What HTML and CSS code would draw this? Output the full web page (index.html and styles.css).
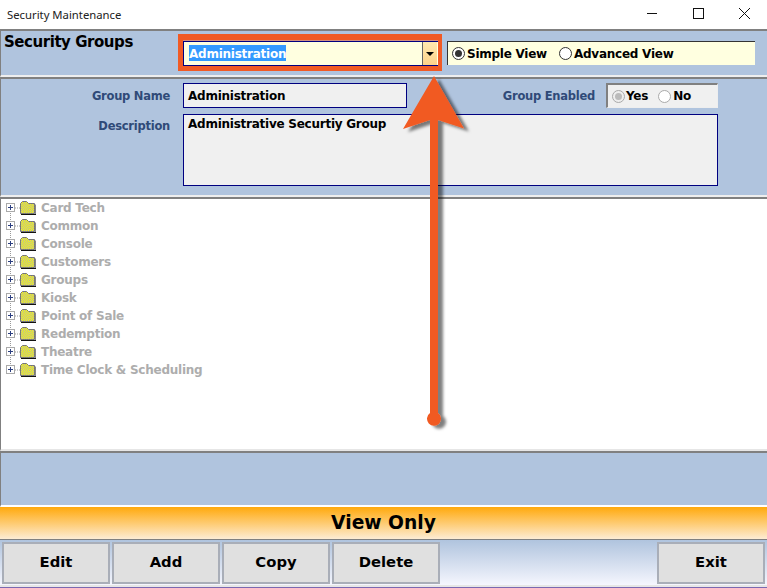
FILE: index.html
```html
<!DOCTYPE html>
<html lang="en">
<head>
    <meta charset="UTF-8">
    <meta name="viewport" content="width=device-width, initial-scale=1.0">
    <title>Security Maintenance</title>
    <link rel="stylesheet" href="styles.css">
</head>
<body>
    <svg class="defs" width="0" height="0">
        <defs>
            <pattern id="dither" width="2" height="2" patternUnits="userSpaceOnUse">
                <rect width="2" height="2" fill="#ffff00"/>
                <rect width="1" height="1" fill="#b0b0a8"/>
                <rect x="1" y="1" width="1" height="1" fill="#b0b0a8"/>
            </pattern>
            <symbol id="tree-icon" viewBox="0 0 36 18">
                <path d="M15 9h5" stroke="#999" stroke-dasharray="1 1" fill="none"/>
                <rect x="6.5" y="4.5" width="8" height="8" fill="#fff" stroke="#aaa"/>
                <path d="M8 8.5h5M10.5 6v5" stroke="#2c3f80" fill="none"/>
                <path d="M20.5 14.5v-10l2-2h4l2 2h6v10z" fill="url(#dither)" stroke="#777"/>
                <path d="M21 15.5h15v-10" stroke="#111" fill="none"/>
            </symbol>
        </defs>
    </svg>

    <div class="titlebar">
        <span class="title-text">Security Maintenance</span>
        <div class="window-buttons">
            <svg width="46" height="29" viewBox="0 0 46 29"><path d="M18 13.5h10" stroke="#111"/></svg>
            <svg width="46" height="29" viewBox="0 0 46 29"><rect x="18.5" y="8.5" width="10" height="10" fill="none" stroke="#111"/></svg>
            <svg width="46" height="29" viewBox="0 0 46 29"><path d="M18 8l11 11M29 8l-11 11" stroke="#111" fill="none"/></svg>
        </div>
    </div>

    <!-- Group picker -->
    <div class="panel header-panel">
        <h1 class="panel-title">Security Groups</h1>
        <div class="combo">
            <div class="combo-value"><span class="selected">Administration</span></div>
            <div class="combo-arrow"></div>
        </div>
        <div class="view-box">
            <span class="radio radio-on"></span><span class="radio-label">Simple View</span>
            <span class="radio radio-second"></span><span class="radio-label">Advanced View</span>
        </div>
    </div>

    <!-- Group details -->
    <div class="panel details-panel">
        <div class="details-row">
            <label class="field-label">Group Name</label>
            <div class="field name-field">Administration</div>
            <label class="field-label enabled-label">Group Enabled</label>
            <div class="enabled-box">
                <span class="radio radio-disabled"></span><span class="radio-label">Yes</span>
                <span class="radio radio-blank"></span><span class="radio-label">No</span>
            </div>
        </div>
        <div class="details-row description-row">
            <label class="field-label">Description</label>
            <div class="field description-field">Administrative Securtiy Group</div>
        </div>
    </div>

    <!-- Permission tree -->
    <div class="tree-panel">
        <ul class="tree">
            <li><svg class="tree-svg"><use href="#tree-icon"/></svg>Card Tech</li>
            <li><svg class="tree-svg"><use href="#tree-icon"/></svg>Common</li>
            <li><svg class="tree-svg"><use href="#tree-icon"/></svg>Console</li>
            <li><svg class="tree-svg"><use href="#tree-icon"/></svg>Customers</li>
            <li><svg class="tree-svg"><use href="#tree-icon"/></svg>Groups</li>
            <li><svg class="tree-svg"><use href="#tree-icon"/></svg>Kiosk</li>
            <li><svg class="tree-svg"><use href="#tree-icon"/></svg>Point of Sale</li>
            <li><svg class="tree-svg"><use href="#tree-icon"/></svg>Redemption</li>
            <li><svg class="tree-svg"><use href="#tree-icon"/></svg>Theatre</li>
            <li><svg class="tree-svg"><use href="#tree-icon"/></svg>Time Clock &amp; Scheduling</li>
        </ul>
    </div>

    <div class="panel status-panel"></div>

    <div class="mode-bar">View Only</div>

    <div class="button-bar">
        <button class="btn">Edit</button>
        <button class="btn">Add</button>
        <button class="btn">Copy</button>
        <button class="btn">Delete</button>
        <button class="btn btn-exit">Exit</button>
    </div>

    <!-- Annotation drawn over the screenshot -->
    <svg class="annotation" width="767" height="588" viewBox="0 0 767 588">
        <defs>
            <filter id="arrow-shadow" x="-60%" y="-10%" width="220%" height="120%">
                <feDropShadow dx="5" dy="3" stdDeviation="1.5" flood-color="#000" flood-opacity="0.5"/>
            </filter>
        </defs>
        <path d="M178 34H442V71H178Z M183 40.5V66H438V40.5Z" fill="#f15a24" fill-rule="evenodd"/>
        <path d="M434 76 L464 128.5 L438 120 V413 A7 7 0 1 1 430 413 V120 L403 129 Z" fill="#f15a24" filter="url(#arrow-shadow)"/>
    </svg>
</body>
</html>
```

FILE: styles.css
```css
* {
    margin: 0;
    padding: 0;
    box-sizing: border-box;
    font-family: 'DejaVu Sans', sans-serif;
}

html, body {
    width: 767px;
    height: 588px;
    overflow: hidden;
}

body {
    position: relative;
    background-color: white;
    font-size: 12px;
    letter-spacing: -0.25px;
    font-weight: bold;
    color: black;
}

.defs {
    position: absolute;
}

.titlebar {
    height: 29px;
    display: flex;
    justify-content: space-between;
    align-items: center;
    padding-left: 7px;
}

.title-text {
    font-family: 'Noto Sans', sans-serif;
    font-size: 11.3px;
    letter-spacing: 0;
    font-weight: normal;
    color: #222;
}

.window-buttons {
    display: flex;
}

.window-buttons svg {
    display: block;
}

.panel {
    background-color: #b0c4de;
    border-top: 2px solid #808080;
    border-left: 1px solid #808080;
}

.header-panel {
    height: 48px;
    display: flex;
    align-items: flex-start;
    border-bottom: 2px solid #eee;
    padding-top: 10px;
}

.panel-title {
    width: 182px;
    margin-top: -10px;
    padding-left: 3px;
    font-size: 15px;
    letter-spacing: -0.45px;
    line-height: 22px;
}

.combo {
    width: 257px;
    height: 25px;
    display: flex;
    background-color: #ffffe0;
    border: 1px solid #000080;
}

.combo-value {
    flex: 1;
    padding: 3px 5px;
}

.selected {
    display: inline-block;
    height: 16px;
    line-height: 18px;
    background-color: #3399ff;
    color: white;
}

.combo-arrow {
    width: 15px;
    margin-right: 2px;
    position: relative;
    border-left: 1px solid #666;
    background: linear-gradient(#ffe9b0, #fdd28a);
}

.combo-arrow::after {
    content: '';
    position: absolute;
    left: 3px;
    top: 10px;
    border-left: 4px solid transparent;
    border-right: 4px solid transparent;
    border-top: 4px solid black;
}

.view-box {
    width: 308px;
    height: 24px;
    margin-left: 7px;
    display: flex;
    align-items: center;
    padding-left: 4px;
    background-color: #ffffe0;
    border-top: 1px solid #333;
    border-left: 1px solid #333;
}

.radio {
    width: 13px;
    height: 13px;
    flex: none;
    position: relative;
    border: 1px solid #333;
    border-radius: 50%;
    background-color: white;
    margin-right: 2px;
}

.radio-on::after,
.radio-disabled::after {
    content: '';
    position: absolute;
    left: 2px;
    top: 2px;
    width: 7px;
    height: 7px;
    border-radius: 50%;
    background-color: #333;
}

.radio-second {
    margin-left: 12px;
}

.radio-disabled {
    border-color: #aaa;
    background-color: #eee;
    margin-right: 1px;
}

.radio-disabled::after {
    background-color: #bbb;
}

.radio-blank {
    margin-left: 10px;
    border-color: #aaa;
}

.details-panel {
    height: 120px;
    padding-top: 4px;
    border-bottom: 2px solid #eee;
}

.details-row {
    display: flex;
    align-items: flex-start;
}

.description-row {
    margin-top: 4px;
}

.field-label {
    width: 169px;
    margin-right: 13px;
    text-align: right;
    font-size: 11.5px;
    color: #2f4a78;
    line-height: 27px;
}

.description-row .field-label {
    line-height: 24px;
}

.field {
    background-color: #f0f0f0;
    border: 1px solid #000080;
    padding-left: 4px;
}

.name-field {
    width: 224px;
    height: 25px;
    line-height: 25px;
}

.description-field {
    width: 535px;
    height: 72px;
    padding-top: 1px;
    line-height: 17px;
}

.enabled-label {
    width: 188px;
    margin-right: 11px;
}

.enabled-box {
    width: 112px;
    height: 25px;
    display: flex;
    align-items: center;
    padding-left: 4px;
    background-color: #f0f0f0;
    border-top: 2px solid #808080;
    border-left: 2px solid #808080;
    border-right: 1px solid #eee;
    border-bottom: 1px solid #eee;
}

.tree-panel {
    height: 254px;
    border-top: 2px solid #808080;
    border-left: 1px solid #808080;
    border-bottom: 2px solid #e6e6e6;
}

.tree {
    list-style: none;
    position: relative;
}

.tree::before {
    content: '';
    position: absolute;
    left: 9px;
    top: 9px;
    height: 162px;
    border-left: 1px dotted #999;
}

.tree li {
    height: 18px;
    display: flex;
    align-items: center;
    position: relative;
    color: #adadad;
}

.tree-svg {
    width: 36px;
    height: 18px;
    margin-left: -1px;
    margin-right: 5px;
}

.status-panel {
    height: 56px;
    border-bottom: 2px solid white;
}

.mode-bar {
    height: 33px;
    border-bottom: 1px solid #808080;
    background: linear-gradient(#ffa90c, #fdecd4);
    text-align: center;
    font-size: 18.7px;
    letter-spacing: 0;
    line-height: 31px;
}

.button-bar {
    height: 48px;
    display: flex;
    gap: 2px;
    padding: 2px;
    border-bottom: 1px solid #7b68b0;
    background: linear-gradient(#b0c4de, #f8f8ff);
    box-shadow: inset 0 -2px 0 #e6e6e6;
}

.btn {
    width: 108px;
    height: 42px;
    padding-bottom: 3px;
    background-color: #e0e0e0;
    border: 2px solid #a9aeb8;
    font-size: 14.8px;
    letter-spacing: 0;
    font-weight: bold;
    color: black;
}

.btn-exit {
    margin-left: auto;
}

.annotation {
    position: absolute;
    left: 0;
    top: 0;
}
```
